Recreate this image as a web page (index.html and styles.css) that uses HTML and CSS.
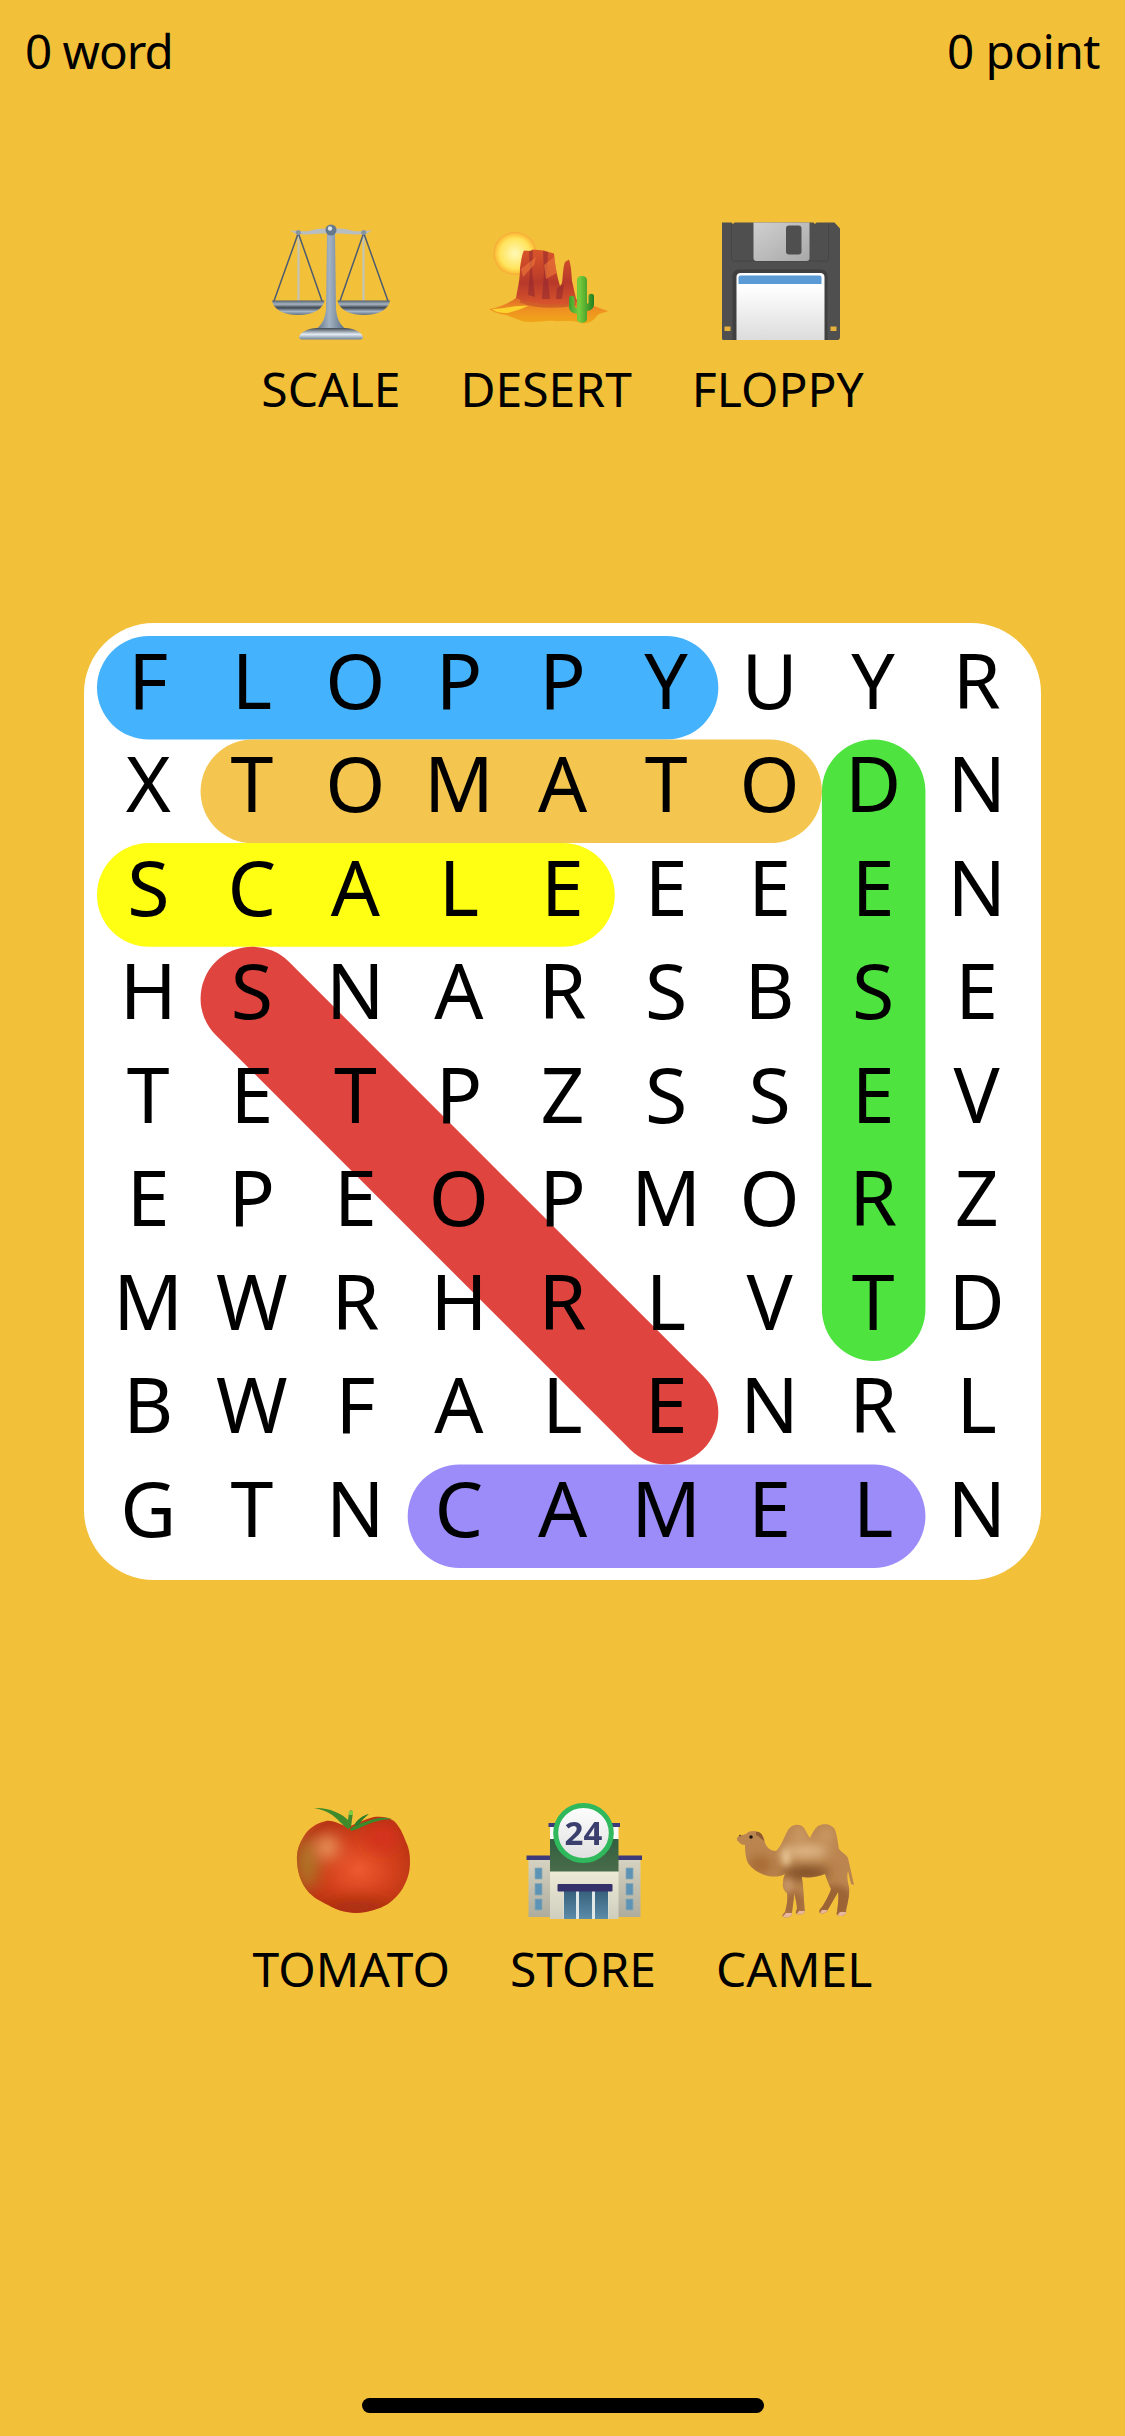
FILE: index.html
```html
<!DOCTYPE html>
<html lang="en">
<head>
<meta charset="UTF-8" />
<meta name="viewport" content="width=device-width, initial-scale=1" />
<title>Word Search</title>
<link rel="stylesheet" href="styles.css">
</head>
<body>
  <header class="score-bar">
    <span>0 word</span>
    <span class="score-points">0 point</span>
  </header>

  <section class="word-row">
    <div class="word">
      <!-- scale -->
      <svg class="emoji" viewBox="-4 0 128 120">
        <defs>
          <linearGradient id="steel" x1="0" y1="0" x2="1" y2="0">
            <stop offset="0" stop-color="#5f7389"/><stop offset=".45" stop-color="#a3b2c2"/><stop offset="1" stop-color="#566a80"/>
          </linearGradient>
          <linearGradient id="pan" x1="0" y1="0" x2="0" y2="1">
            <stop offset="0" stop-color="#4f5d6e"/><stop offset=".25" stop-color="#a8b4c0"/><stop offset=".5" stop-color="#3f4853"/><stop offset=".75" stop-color="#a9b7c6"/><stop offset="1" stop-color="#5d7086"/>
          </linearGradient>
          <linearGradient id="base" x1="0" y1="0" x2="0" y2="1">
            <stop offset="0" stop-color="#3e4650"/><stop offset=".55" stop-color="#e4edf5"/><stop offset="1" stop-color="#6f8298"/>
          </linearGradient>
        </defs>
        <path d="M19 9.500C30 10 36 11 40 9.500S52 7 60 8C68 7 76 8 80 9.500S90 10 101 9.500L95 13C84 14 76 13 70 12.500H50C44 13 36 14 25 13Z" fill="#b7bdc0"/>
        <path d="M27.500 14V80M92.500 14V80" stroke="#c4c5b4" stroke-width="2.200"/>
        <path d="M27.300 12 3 80M27.300 12 51 80M92.700 12 69 80M92.700 12 117 80" stroke="#4d5c70" stroke-width="1.500" fill="none"/>
        <circle cx="27.300" cy="11.500" r="2.500" fill="#8795a3"/>
        <circle cx="92.700" cy="11.500" r="2.500" fill="#8795a3"/>
        <path d="M1 79.500H53.500C52.500 88 42 94 27 94S2 88 1 79.500Z" fill="url(#pan)"/>
        <path d="M66.500 79.500H119C118 88 108 94 93 94S67.500 88 66.500 79.500Z" fill="url(#pan)"/>
        <path d="M56 13H64L65 88C66 98 69 104 75 108H45C51 104 54 98 55 88Z" fill="url(#steel)"/>
        <circle cx="60" cy="9" r="5.500" fill="#66788c"/>
        <circle cx="59" cy="7.500" r="2.200" fill="#dbe3ea"/>
        <path d="M46 107H74C82 107 91 111 92 116C92 118 90 118.500 88 118.500H32C30 118.500 28 118 28 116C29 111 38 107 46 107Z" fill="url(#base)"/>
      </svg>
      <span class="word-label">SCALE</span>
    </div>
    <div class="word">
      <!-- desert -->
      <svg class="emoji" viewBox="-4 0 128 120">
        <defs>
          <radialGradient id="sun">
            <stop offset="0" stop-color="#fff9b8"/><stop offset=".7" stop-color="#ffe45c"/><stop offset=".9" stop-color="#fcc43c"/><stop offset="1" stop-color="#f6a53a"/>
          </radialGradient>
          <linearGradient id="rock" x1="0" y1="0" x2="0" y2="1">
            <stop offset="0" stop-color="#d9562a"/><stop offset=".6" stop-color="#b8392a"/><stop offset="1" stop-color="#d8552c"/>
          </linearGradient>
          <linearGradient id="sand" x1="0" y1="0" x2="0" y2="1">
            <stop offset="0" stop-color="#d9602a"/><stop offset=".5" stop-color="#ef8f22"/><stop offset="1" stop-color="#f0a818"/>
          </linearGradient>
          <linearGradient id="cactus" x1="0" y1="0" x2="1" y2="0">
            <stop offset="0" stop-color="#3e9e2c"/><stop offset=".4" stop-color="#79cf3c"/><stop offset="1" stop-color="#23801f"/>
          </linearGradient>
        </defs>
        <circle cx="29" cy="32.500" r="21.500" fill="url(#sun)"/>
        <path d="M3.500 88C14 86 24 82 31 76C46 72 78 74 90 78C100 82 110 86 122 90C118 92 112 92 110 96C106 102 98 104 92 101C84 99 76 101 68 100C58 99 46 103 36 100C28 98 24 94 14 93C10 92 6 90 3.500 88Z" fill="url(#sand)"/>
        <path d="M6 88C18 88 30 84 42 85C36 88 28 90 22 92C14 92 9 91 6 88Z" fill="#fcd22f"/>
        <path d="M30 77C32 66 34 58 34 47C35 40 36 33 38 29.500L45 30 47 28.500 58 29.500 61 30.500 68 32.500C69 45 71 55 74 65L76 62C77 55 77 46 79 41L83 38.500C85 44 85.500 52 86 60C87.500 66 89 74 91 81C72 86 46 84 30 77Z" fill="url(#rock)"/>
        <path d="M43 30 47 29 46 50 49 76 42 74 44 50ZM57 30 62 31 61 50 64 78 56 78 58 52ZM71 67 78 63 76 78 70 78Z" fill="#90272f" opacity=".55"/>
        <path d="M35 48C40 44 45 40 50 36L48 44 37 56ZM58 44 68 36 71 52 60 58Z" fill="#ee7a3a" opacity=".6"/>
        <path d="M34 80C50 86 72 86 90 83" stroke="#c2492b" stroke-width="3" fill="none" opacity=".6"/>
        <path d="M83 77C83 74 88.500 74 88.500 77V84C88.500 86 89 87 91 87H91V59C91 53.500 101 53.500 101 59V83C102 83 102.500 82 102.500 81V75C102.500 72 108 72 108 75V83C108 87 105 90 101 90V98C101 103 91 103 91 98V92.500H90C86 92.500 83 89.500 83 86Z" fill="url(#cactus)"/>
      </svg>
      <span class="word-label">DESERT</span>
    </div>
    <div class="word">
      <!-- floppy -->
      <svg class="emoji" viewBox="-4 0 128 120">
        <defs>
          <linearGradient id="shutter" x1="0" y1="0" x2="1" y2="1">
            <stop offset="0" stop-color="#d0d0d0"/><stop offset="1" stop-color="#a8a8a8"/>
          </linearGradient>
          <linearGradient id="disk-label" x1="0" y1="0" x2="0" y2="1">
            <stop offset=".2" stop-color="#ffffff"/><stop offset="1" stop-color="#dcdcdc"/>
          </linearGradient>
        </defs>
        <g class="nudge">
          <path d="M2.500 1.500H12L13.500 3 15 1.500H94L95.500 3 97 1.500H115L120.500 7.500V116C120.500 118 119.500 119 118 119H4C3 119 2.500 118.500 2.500 117Z" fill="#4f4f4f"/>
          <path d="M12 3V37C12 39 13 40 15 40H106C108 40 109 39 109 37V3" stroke="#454545" stroke-width="1" fill="none"/>
          <path d="M34 1.500H90V37C90 39 89 40 87 40H37C35 40 34 39 34 37Z" fill="url(#shutter)"/>
          <rect x="66.500" y="4.500" width="15.500" height="29" rx="3" fill="#4f4f4f"/>
          <path d="M13 119V55C13 51 16 48.500 20 48.500H101C105 48.500 108 51 108 55V119Z" fill="#3f3f3f"/>
          <path d="M17 119V56C17 53.500 18.500 52 21 52H101C103 52 105 53.500 105 56V119Z" fill="url(#disk-label)"/>
          <path d="M19 56.500C19 55.200 20 54.500 21 54.500H100C101 54.500 102 55.200 102 56.500V63H19Z" fill="#5b9bd5"/>
          <rect x="5" y="105.500" width="6" height="4.500" fill="#e6b23a"/>
          <rect x="111" y="105.500" width="6" height="4.500" fill="#e6b23a"/>
        </g>
      </svg>
      <span class="word-label">FLOPPY</span>
    </div>
  </section>

  <section class="board">
    <svg class="marks" viewBox="0 0 9 9">
      <line class="mark" x1=".5" y1=".5" x2="5.5" y2=".5" stroke="#44b2fc"/>
      <line class="mark" x1="1.5" y1="1.5" x2="6.5" y2="1.5" stroke="#f4c64f"/>
      <line class="mark" x1=".5" y1="2.5" x2="4.5" y2="2.5" stroke="#ffff14"/>
      <line class="mark" x1="7.5" y1="1.5" x2="7.5" y2="6.5" stroke="#4fe33f"/>
      <line class="mark" x1="1.5" y1="3.5" x2="5.5" y2="7.5" stroke="#e0443f"/>
      <line class="mark" x1="3.5" y1="8.5" x2="7.5" y2="8.5" stroke="#9c8cf9"/>
    </svg>
    <div class="letters">
      <span>F</span><span>L</span><span>O</span><span>P</span><span>P</span><span>Y</span><span>U</span><span>Y</span><span>R</span>
      <span>X</span><span>T</span><span>O</span><span>M</span><span>A</span><span>T</span><span>O</span><span>D</span><span>N</span>
      <span>S</span><span>C</span><span>A</span><span>L</span><span>E</span><span>E</span><span>E</span><span>E</span><span>N</span>
      <span>H</span><span>S</span><span>N</span><span>A</span><span>R</span><span>S</span><span>B</span><span>S</span><span>E</span>
      <span>T</span><span>E</span><span>T</span><span>P</span><span>Z</span><span>S</span><span>S</span><span>E</span><span>V</span>
      <span>E</span><span>P</span><span>E</span><span>O</span><span>P</span><span>M</span><span>O</span><span>R</span><span>Z</span>
      <span>M</span><span>W</span><span>R</span><span>H</span><span>R</span><span>L</span><span>V</span><span>T</span><span>D</span>
      <span>B</span><span>W</span><span>F</span><span>A</span><span>L</span><span>E</span><span>N</span><span>R</span><span>L</span>
      <span>G</span><span>T</span><span>N</span><span>C</span><span>A</span><span>M</span><span>E</span><span>L</span><span>N</span>
    </div>
  </section>

  <section class="word-row word-row-bottom">
    <div class="word">
      <!-- tomato -->
      <svg class="emoji" viewBox="-4 0 128 120">
        <defs>
          <radialGradient id="tomato-skin" cx=".55" cy=".55" r=".62">
            <stop offset="0" stop-color="#ee5a30"/><stop offset=".5" stop-color="#d2401b"/><stop offset=".9" stop-color="#b53212"/><stop offset="1" stop-color="#c4401a"/>
          </radialGradient>
          <filter id="soft" filterUnits="userSpaceOnUse" x="-10" y="-10" width="140" height="140"><feGaussianBlur stdDeviation="8"/></filter>
          <clipPath id="tomato-clip"><path d="M57 26C50 24 43 19 35 20C25 22 17 28 13 35C8 43 5.500 50 6 60C6.500 70 9 78 13 85C19 95 27 99 37 104C47 110 57 112 67 112C78 111 88 108 97 103C105 97 110 91 113 85C117 77 119 70 119 61C119 53 118 47 115 41C112 33 109 26 103 20C98 16 90 15 83 16C74 18 65 23 57 26Z"/></clipPath>
        </defs>
        <path d="M57 26C50 24 43 19 35 20C25 22 17 28 13 35C8 43 5.500 50 6 60C6.500 70 9 78 13 85C19 95 27 99 37 104C47 110 57 112 67 112C78 111 88 108 97 103C105 97 110 91 113 85C117 77 119 70 119 61C119 53 118 47 115 41C112 33 109 26 103 20C98 16 90 15 83 16C74 18 65 23 57 26Z" fill="url(#tomato-skin)"/>
        <g clip-path="url(#tomato-clip)">
          <ellipse cx="16" cy="62" rx="12" ry="26" fill="#ae7426" filter="url(#soft)"/>
          <ellipse cx="92" cy="36" rx="18" ry="14" fill="#d5301a" filter="url(#soft)"/>
          <ellipse cx="36" cy="46" rx="12" ry="12" fill="#ea9a60" filter="url(#soft)"/>
          <ellipse cx="66" cy="106" rx="36" ry="7" fill="#a02a10" filter="url(#soft)"/>
        </g>
        <path d="M23 7C33 9 40 12 46 18C50 22 54 26 57 28L60 26L62 11C62 9 58 9 58 11L57 19C51 12 36 6 23 7Z" fill="#3f8a2a"/>
        <path d="M59 28C62 25 68 23 74 21C82 18 92 15 101 18C92 18 82 21 75 24C70 26 64 29 60 30Z" fill="#3a8b2b"/>
        <path d="M63 24C66 19 72 14 78 13C74 16 70 20 67 25Z" fill="#2f7d28"/>
        <path d="M58 10H62V14H58Z" fill="#7ccd3f"/>
      </svg>
      <span class="word-label">TOMATO</span>
    </div>
    <div class="word">
      <!-- convenience store -->
      <svg class="emoji" viewBox="-4 0 128 120">
        <defs>
          <linearGradient id="wing" x1="0" y1="0" x2="0" y2="1">
            <stop offset="0" stop-color="#d6d3c2"/><stop offset="1" stop-color="#aeac9d"/>
          </linearGradient>
          <linearGradient id="front" x1="0" y1="0" x2="0" y2="1">
            <stop offset="0" stop-color="#edebd6"/><stop offset="1" stop-color="#cfcdbd"/>
          </linearGradient>
          <linearGradient id="awning-band" x1="0" y1="0" x2="0" y2="1">
            <stop offset="0" stop-color="#315f3f"/><stop offset="1" stop-color="#4a6c4a"/>
          </linearGradient>
          <linearGradient id="door" x1="0" y1="0" x2="0" y2="1">
            <stop offset="0" stop-color="#37607c"/><stop offset="1" stop-color="#5c8ca8"/>
          </linearGradient>
          <linearGradient id="sign" x1="0" y1="0" x2="0" y2="1">
            <stop offset="0" stop-color="#ffffff"/><stop offset="1" stop-color="#dfdfdf"/>
          </linearGradient>
        </defs>
        <rect x="5.500" y="57" width="22" height="59" fill="url(#wing)"/>
        <rect x="95" y="57" width="22.500" height="59" fill="url(#wing)"/>
        <rect x="3.500" y="54.500" width="24" height="4.500" fill="#3c3a78"/>
        <rect x="95" y="54.500" width="24" height="4.500" fill="#3c3a78"/>
        <path d="M12 67H19V78H12ZM12 82.500H19V94H12ZM12 98H19V109H12ZM103 67H110V78H103ZM103 82.500H110V94H103ZM103 98H110V109H103Z" fill="#5d93b4" stroke="#8ea9b4" stroke-width=".8"/>
        <rect x="27" y="24" width="68.500" height="16" fill="#fafafa"/>
        <rect x="25.500" y="22" width="71.500" height="4" fill="#3c3a78"/>
        <rect x="27" y="38" width="68.500" height="33" fill="url(#awning-band)"/>
        <rect x="27" y="70.500" width="68.500" height="47.500" fill="url(#front)"/>
        <rect x="40.500" y="90" width="45" height="28" fill="#dfe8e6"/>
        <rect x="41" y="90" width="12" height="28" fill="url(#door)"/>
        <rect x="56" y="90" width="13" height="28" fill="url(#door)"/>
        <rect x="72" y="90" width="13" height="28" fill="url(#door)"/>
        <rect x="34.500" y="83" width="55" height="7.500" rx="1" fill="#34316b"/>
        <ellipse cx="60.500" cy="32" rx="27.800" ry="27.500" fill="url(#sign)" stroke="#2fb85c" stroke-width="5"/>
        <text class="sign-hours" x="60.500" y="43.500" text-anchor="middle">24</text>
      </svg>
      <span class="word-label">STORE</span>
    </div>
    <div class="word">
      <!-- camel -->
      <svg class="emoji" viewBox="-4 0 128 120">
        <defs>
          <filter id="fur" filterUnits="userSpaceOnUse" x="-10" y="0" width="140" height="130"><feGaussianBlur stdDeviation="6"/></filter>
          <filter id="fur-fine" filterUnits="userSpaceOnUse" x="-10" y="0" width="140" height="130"><feGaussianBlur stdDeviation="3"/></filter>
          <clipPath id="camel-clip">
            <path d="M3 37C5 34 9 34 12 33C14 30 20 29 24 31C28 32 30 36 31 42C33 47 37 50 42 50C47 46 50 36 54 29C58 23 66 22 70 27C72 30 74 35 76 37C78 33 80 28 84 25C90 22 98 23 101 29C103 34 104 42 105 48C108 52 112 53 114 57L116 66L120 84L117 83L114 70C113 74 113 78 115 86C116 94 113 104 112 110C113 113 110 115 106 115C103 115 102 113 103 111C104 104 105 96 104 91C100 98 96 105 93 110C92 112 88 113 86 112C84 110 86 108 88 106C92 100 96 92 97 88C94 82 92 76 91 73C84 76 75 77 68 76C68 80 69 82 69 85C70 94 70 104 71 110C71 113 66 114 63 113C61 112 62 110 63 108C63 102 61 96 60 92C60 100 58 108 58 113C58 116 52 117 49 116C47 115 49 113 51 111C53 104 54 98 53 92C50 90 48 86 49 82C49 78 50 75 51 73C46 76 40 76 34 75C26 73 18 68 14 62C11 55 11 48 11 44C8 44 6 43 5 41C3 40 3 39 3 37Z"/>
          </clipPath>
        </defs>
        <g clip-path="url(#camel-clip)">
          <rect x="0" y="20" width="124" height="100" fill="#bb8550"/>
          <ellipse cx="72" cy="72" rx="24" ry="6" fill="#74431d" filter="url(#fur)"/>
          <ellipse cx="72" cy="50" rx="22" ry="6" fill="#e6c291" filter="url(#fur)"/>
          <ellipse cx="52" cy="56" rx="5" ry="9" fill="#e3c18f" filter="url(#fur-fine)"/>
          <ellipse cx="66" cy="34" rx="7" ry="7" fill="#d2a26d" filter="url(#fur)"/>
          <ellipse cx="92" cy="34" rx="7" ry="7" fill="#d2a26d" filter="url(#fur)"/>
          <ellipse cx="26" cy="64" rx="12" ry="9" fill="#a56833" filter="url(#fur)"/>
          <ellipse cx="100" cy="100" rx="20" ry="16" fill="#9c6435" filter="url(#fur-fine)"/>
          <ellipse cx="60" cy="104" rx="12" ry="14" fill="#a56c3e" filter="url(#fur-fine)"/>
          <ellipse cx="54" cy="84" rx="5" ry="6" fill="#c6966a" filter="url(#fur-fine)"/>
          <path d="M47 118 52 112H58V118ZM62 114 65 110H71V114ZM85 114 88 109H93V114ZM102 116 106 111H113V116Z" fill="#e8b79c"/>
        </g>
        <path d="M22 31C26 30 29 34 30 40C27 38 25 35 22 34Z" fill="#8f5a30"/>
        <circle cx="17" cy="36" r="1.800" fill="#1e1410"/>
        <circle cx="6" cy="34.500" r=".8" fill="#3a2416"/>
      </svg>
      <span class="word-label">CAMEL</span>
    </div>
  </section>

  <div class="home-indicator"></div>
</body>
</html>
```

FILE: styles.css
```css
* {
  box-sizing: border-box;
}
body {
  margin: 0;
  width: 1125px;
  height: 2436px;
  background: #f3c03a;
  color: #000;
  font-family: "Noto Sans", "Open Sans", sans-serif;
  overflow: hidden;
}

.score-bar {
  display: flex;
  justify-content: space-between;
  padding: 19px 25px 0;
  height: 83px;
  font-size: 47.6px;
  line-height: 64px;
  letter-spacing: -1px;
}
.score-points {
  letter-spacing: -.5px;
}

.word-row {
  display: flex;
  justify-content: center;
  gap: 60px;
  margin-top: 138px;
}
.word-row-bottom {
  margin-top: 221px;
}
.word {
  display: flex;
  flex-direction: column;
  align-items: center;
}
.emoji {
  display: block;
  width: 128px;
  height: 120px;
  filter: blur(.5px);
}
.nudge {
  transform: translateX(1.5px);
}
.word-label {
  margin-top: 16px;
  font-size: 48px;
  line-height: 64px;
}
.sign-hours {
  font-size: 33px;
  font-weight: 700;
  fill: #3a3f6e;
}

.board {
  position: relative;
  width: 957px;
  margin: 202px auto 0;
  padding: 12.5px;
  background: #fff;
  border-radius: 70px;
}
.marks {
  position: absolute;
  top: 12.5px;
  left: 12.5px;
  width: 932px;
  height: 932px;
}
.mark {
  stroke-width: 1;
  stroke-linecap: round;
}
.letters {
  position: relative;
  display: grid;
  grid-template-columns: repeat(9, 1fr);
  grid-auto-rows: 103.556px;
  font-size: 77px;
  line-height: 88px;
  text-align: center;
}

.home-indicator {
  width: 402px;
  height: 15px;
  margin: 397px auto 0;
  background: #000;
  border-radius: 8px;
}
```
